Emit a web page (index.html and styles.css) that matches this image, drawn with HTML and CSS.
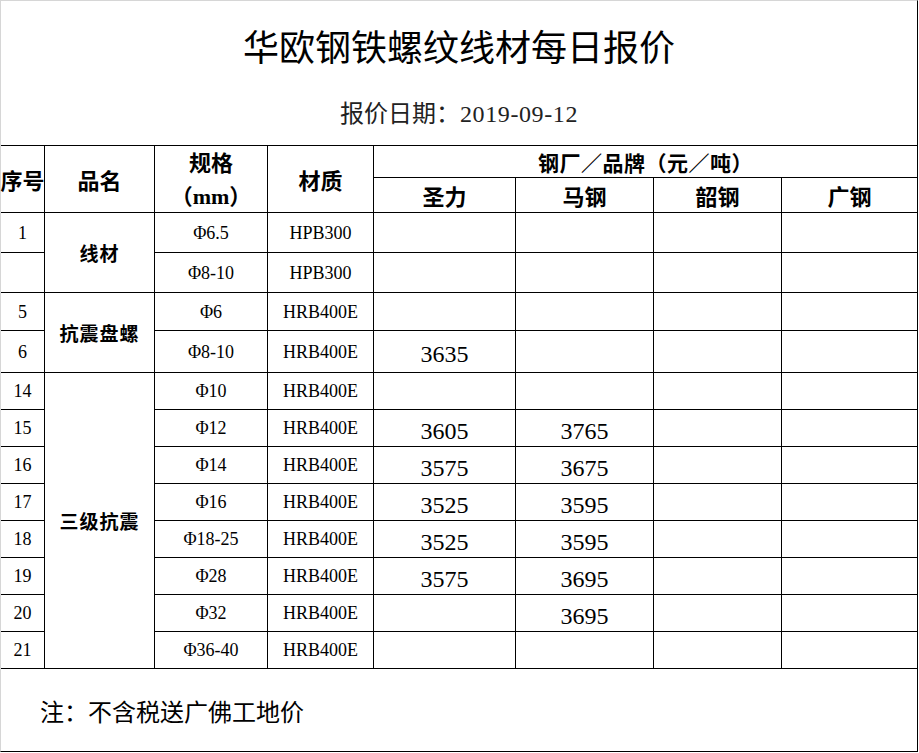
FILE: index.html
```html
<!DOCTYPE html>
<html lang="zh-CN">
<head>
<meta charset="utf-8">
<title>华欧钢铁螺纹线材每日报价</title>
<link rel="stylesheet" href="styles.css">
</head>
<body>
<div class="sheet">
  <header class="head">
    <h1 class="title">华欧钢铁螺纹线材每日报价</h1>
    <p class="date">报价日期：<span class="num">2019-09-12</span></p>
  </header>
  <div class="grid">
    <div class="c h span2">序号</div>
    <div class="c h span2">品名</div>
    <div class="c h span2 spec"><span>规格</span><span>（<b class="mm">mm</b>）</span></div>
    <div class="c h span2">材质</div>
    <div class="c h brand r">钢厂／品牌（元／吨）</div>
    <div class="c h">圣力</div>
    <div class="c h">马钢</div>
    <div class="c h">韶钢</div>
    <div class="c h r">广钢</div>

    <div class="c">1</div>
    <div class="c name span2">线材</div>
    <div class="c">Φ6.5</div>
    <div class="c">HPB300</div>
    <div class="c p"></div><div class="c p"></div><div class="c p"></div><div class="c p r"></div>

    <div class="c"></div>
    <div class="c">Φ8-10</div>
    <div class="c">HPB300</div>
    <div class="c p"></div><div class="c p"></div><div class="c p"></div><div class="c p r"></div>

    <div class="c">5</div>
    <div class="c name span2">抗震盘螺</div>
    <div class="c">Φ6</div>
    <div class="c">HRB400E</div>
    <div class="c p"></div><div class="c p"></div><div class="c p"></div><div class="c p r"></div>

    <div class="c">6</div>
    <div class="c">Φ8-10</div>
    <div class="c">HRB400E</div>
    <div class="c p">3635</div><div class="c p"></div><div class="c p"></div><div class="c p r"></div>

    <div class="c">14</div>
    <div class="c name span8">三级抗震</div>
    <div class="c">Φ10</div>
    <div class="c">HRB400E</div>
    <div class="c p"></div><div class="c p"></div><div class="c p"></div><div class="c p r"></div>

    <div class="c">15</div>
    <div class="c">Φ12</div>
    <div class="c">HRB400E</div>
    <div class="c p">3605</div><div class="c p">3765</div><div class="c p"></div><div class="c p r"></div>

    <div class="c">16</div>
    <div class="c">Φ14</div>
    <div class="c">HRB400E</div>
    <div class="c p">3575</div><div class="c p">3675</div><div class="c p"></div><div class="c p r"></div>

    <div class="c">17</div>
    <div class="c">Φ16</div>
    <div class="c">HRB400E</div>
    <div class="c p">3525</div><div class="c p">3595</div><div class="c p"></div><div class="c p r"></div>

    <div class="c">18</div>
    <div class="c">Φ18-25</div>
    <div class="c">HRB400E</div>
    <div class="c p">3525</div><div class="c p">3595</div><div class="c p"></div><div class="c p r"></div>

    <div class="c">19</div>
    <div class="c">Φ28</div>
    <div class="c">HRB400E</div>
    <div class="c p">3575</div><div class="c p">3695</div><div class="c p"></div><div class="c p r"></div>

    <div class="c">20</div>
    <div class="c">Φ32</div>
    <div class="c">HRB400E</div>
    <div class="c p"></div><div class="c p">3695</div><div class="c p"></div><div class="c p r"></div>

    <div class="c">21</div>
    <div class="c">Φ36-40</div>
    <div class="c">HRB400E</div>
    <div class="c p"></div><div class="c p"></div><div class="c p"></div><div class="c p r"></div>
  </div>
  <footer class="note">注：不含税送广佛工地价</footer>
</div>
</body>
</html>
```

FILE: styles.css
```css
html, body {
  margin: 0;
  background: #fff;
}

.sheet {
  width: 918px;
  height: 752px;
  box-sizing: border-box;
  border-left: 1px solid #d6d6d6;
  border-top: 1px solid #d6d6d6;
  border-right: 1px solid #000;
  border-bottom: 1px solid #000;
  display: flex;
  flex-direction: column;
  font-family: "Noto Sans CJK SC", sans-serif;
  color: #000;
}

.head {
  height: 144px;
  flex: none;
  box-sizing: border-box;
  padding-top: 26px;
  text-align: center;
}

.title {
  margin: 0;
  font-size: 36px;
  line-height: 36px;
  font-weight: 400;
}

.date {
  margin: 37px 0 0;
  font-size: 24px;
  line-height: 24px;
  color: #222;
}

.num {
  font-family: "Liberation Serif", serif;
  letter-spacing: 0.6px;
}

.grid {
  flex: none;
  display: grid;
  grid-template-columns: 44px 110px 113px 106px 142px 138px 128px 135px;
  grid-template-rows: 32px 35px 40px 40px 38px 42px repeat(8, 37px);
  border-top: 1px solid #000;
}

.c {
  box-sizing: border-box;
  border-right: 1px solid #000;
  border-bottom: 1px solid #000;
  display: flex;
  align-items: center;
  justify-content: center;
  font-family: "Liberation Serif", serif;
  font-size: 18px;
  line-height: 20px;
  white-space: nowrap;
}

.c.r {
  border-right: none;
}

.span2 {
  grid-row: span 2;
}

.span8 {
  grid-row: span 8;
}

.h {
  font-family: "Noto Sans CJK SC", sans-serif;
  font-weight: 700;
  font-size: 22px;
  line-height: 22px;
}

.brand {
  grid-column: span 4;
  font-size: 21px;
  letter-spacing: 0.5px;
}

.spec {
  flex-direction: column;
  line-height: 33px;
}

.mm {
  font-family: "Liberation Serif", serif;
  font-weight: 700;
}

.name {
  font-family: "Noto Sans CJK SC", sans-serif;
  font-weight: 700;
  font-size: 19px;
  letter-spacing: 1px;
}

.p {
  font-size: 24px;
  line-height: 24px;
  padding-top: 5px;
}

.note {
  flex: 1;
  box-sizing: border-box;
  padding: 30px 0 0 39px;
  font-size: 24px;
  line-height: 24px;
}
```
